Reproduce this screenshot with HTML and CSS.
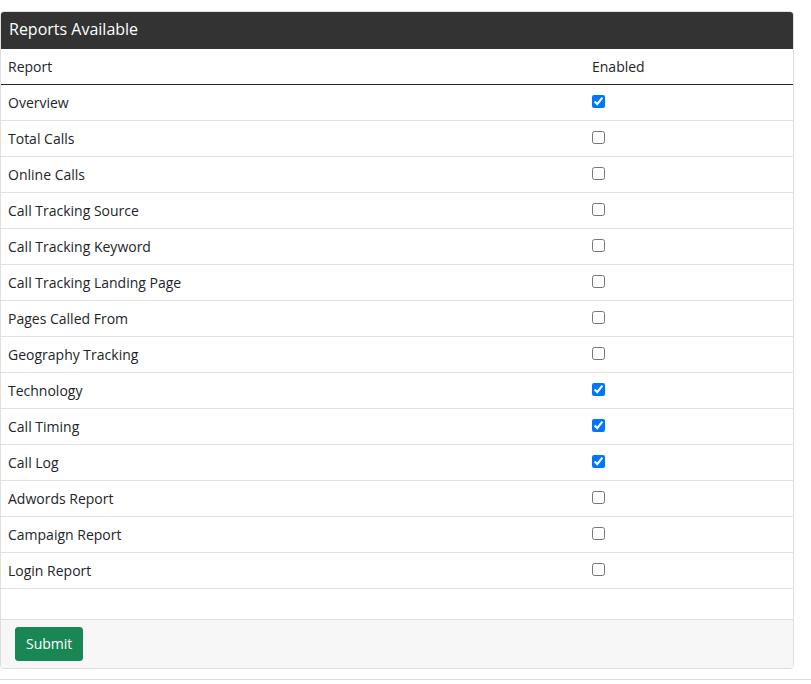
FILE: index.html
```html
<!doctype html>
<html lang="en">

<head>
    <meta charset="UTF-8">
    <meta name="viewport" content="width=device-width, initial-scale=1">
    <title>Reports Available</title>
    <link rel="stylesheet" href="styles.css">
</head>

<body>
    <form class="card">
        <h5 class="card-header">Reports Available</h5>
        <table class="table">
            <thead>
                <tr>
                    <th>Report</th>
                    <th class="enabled">Enabled</th>
                </tr>
            </thead>
            <tbody>
                <tr>
                    <td><label for="overview">Overview</label></td>
                    <td><input type="checkbox" id="overview" checked></td>
                </tr>
                <tr>
                    <td><label for="total-calls">Total Calls</label></td>
                    <td><input type="checkbox" id="total-calls"></td>
                </tr>
                <tr>
                    <td><label for="online-calls">Online Calls</label></td>
                    <td><input type="checkbox" id="online-calls"></td>
                </tr>
                <tr>
                    <td><label for="source">Call Tracking Source</label></td>
                    <td><input type="checkbox" id="source"></td>
                </tr>
                <tr>
                    <td><label for="keyword">Call Tracking Keyword</label></td>
                    <td><input type="checkbox" id="keyword"></td>
                </tr>
                <tr>
                    <td><label for="landing-page">Call Tracking Landing Page</label></td>
                    <td><input type="checkbox" id="landing-page"></td>
                </tr>
                <tr>
                    <td><label for="called-from">Pages Called From</label></td>
                    <td><input type="checkbox" id="called-from"></td>
                </tr>
                <tr>
                    <td><label for="geography">Geography Tracking</label></td>
                    <td><input type="checkbox" id="geography"></td>
                </tr>
                <tr>
                    <td><label for="technology">Technology</label></td>
                    <td><input type="checkbox" id="technology" checked></td>
                </tr>
                <tr>
                    <td><label for="call-timing">Call Timing</label></td>
                    <td><input type="checkbox" id="call-timing" checked></td>
                </tr>
                <tr>
                    <td><label for="call-log">Call Log</label></td>
                    <td><input type="checkbox" id="call-log" checked></td>
                </tr>
                <tr>
                    <td><label for="adwords">Adwords Report</label></td>
                    <td><input type="checkbox" id="adwords"></td>
                </tr>
                <tr>
                    <td><label for="campaign">Campaign Report</label></td>
                    <td><input type="checkbox" id="campaign"></td>
                </tr>
                <tr>
                    <td><label for="login">Login Report</label></td>
                    <td><input type="checkbox" id="login"></td>
                </tr>
            </tbody>
        </table>
        <div class="card-footer">
            <button type="submit" class="btn">Submit</button>
        </div>
    </form>
    <hr class="divider">
</body>

</html>
```
FILE: styles.css
```css
* {
    box-sizing: border-box;
}

body {
    margin: 0;
    padding-top: 11px;
    background: #fff;
    color: #212529;
    font-family: "Open Sans", sans-serif;
    font-size: 14px;
    line-height: 21px;
}

.card {
    margin-right: 17px;
    border: 1px solid #dfdfdf;
    border-radius: 4px;
    overflow: hidden;
}

.card-header {
    margin: 0;
    padding: 7px 8px 9px;
    background: #333;
    color: #fff;
    font-size: 16px;
    font-weight: 400;
    line-height: 21px;
}

.table {
    width: 100%;
    margin-bottom: 30px;
    border-spacing: 0;
}

.table th,
.table td {
    height: 36px;
    padding: 7px;
    border-bottom: 1px solid #dee2e6;
    font-weight: 400;
    text-align: left;
    vertical-align: top;
}

.table th {
    border-bottom-color: #212529;
}

.table .enabled {
    width: 208px;
}

.table input[type="checkbox"] {
    display: block;
    width: 13px;
    height: 13px;
    margin: 3px 0 0;
}

.card-footer {
    padding: 7px 14px;
    border-top: 1px solid #dfdfdf;
    background: #f7f7f7;
}

.btn {
    display: block;
    padding: 5px 10px;
    border: 1px solid #198754;
    border-radius: 3px;
    background: #198754;
    color: #fff;
    font-family: inherit;
    font-size: 14px;
    line-height: 22px;
    cursor: pointer;
}

.divider {
    margin: 10px 0 0;
    border: 0;
    border-top: 1px solid #dcdddd;
}
```
